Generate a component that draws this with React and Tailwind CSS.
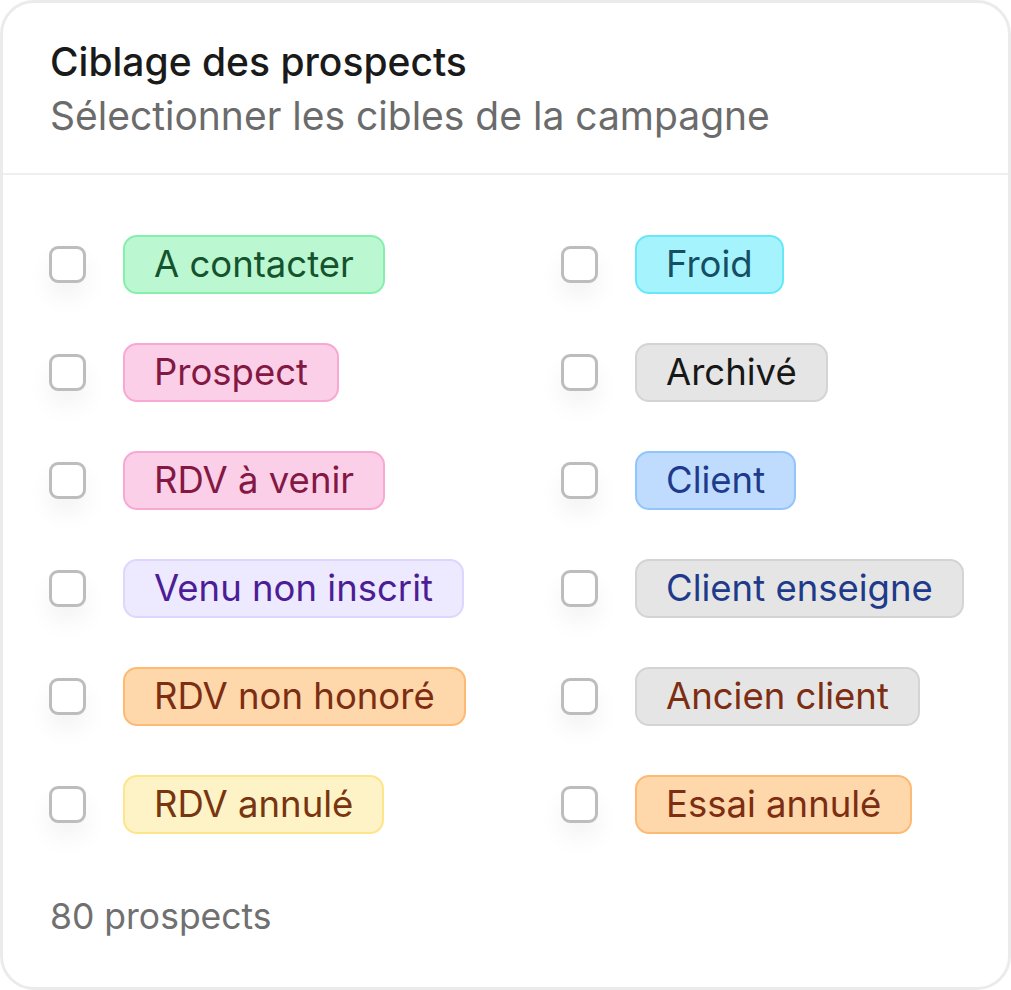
const LEFT = [
  { label: "A contacter", cls: "bg-[#bbf7d0] border-[#86efac] text-[#14532d]" },
  { label: "Prospect", cls: "bg-[#fbcfe8] border-[#f9a8d4] text-[#831843]" },
  { label: "RDV à venir", cls: "bg-[#fbcfe8] border-[#f9a8d4] text-[#831843]" },
  { label: "Venu non inscrit", cls: "bg-[#ede9fe] border-[#ddd6fe] text-[#4c1d95]" },
  { label: "RDV non honoré", cls: "bg-[#fed7aa] border-[#fdba74] text-[#7c2d12]" },
  { label: "RDV annulé", cls: "bg-[#fef3c7] border-[#fde68a] text-[#78350f]" },
];

const RIGHT = [
  { label: "Froid", cls: "bg-[#a5f3fc] border-[#67e8f9] text-[#164e63]" },
  { label: "Archivé", cls: "bg-[#e5e5e5] border-[#d4d4d4] text-[#171717]" },
  { label: "Client", cls: "bg-[#bfdbfe] border-[#93c5fd] text-[#1e3a8a]" },
  { label: "Client enseigne", cls: "bg-[#e5e5e5] border-[#d4d4d4] text-[#1e3a8a]" },
  { label: "Ancien client", cls: "bg-[#e5e5e5] border-[#d4d4d4] text-[#7c2d12]" },
  { label: "Essai annulé", cls: "bg-[#fed7aa] border-[#fdba74] text-[#7c2d12]" },
];

function Row({ item }) {
  return (
    <label className="flex items-center h-[108px] gap-[37px]">
      <span className="w-[37px] h-[37px] shrink-0 rounded-[9px] border-[3px] border-[#bdbdbd] bg-white shadow-[0_14px_24px_rgba(0,0,0,0.05)]" />
      <span className={`inline-flex items-center whitespace-nowrap h-[59px] px-[29px] rounded-[14px] border-2 text-[36.5px] leading-none ${item.cls}`}>
        {item.label}
      </span>
    </label>
  );
}

export default function App() {
  return (
    <div className="bg-white w-[1011px] h-[990px] font-['Inter',sans-serif]">
      <div className="w-[1011px] h-[990px] rounded-[34px] border-[3px] border-[#ebebeb] bg-white flex flex-col">
        {/* Header */}
        <div className="px-[47px] pt-[32px] pb-[30px] border-b-2 border-[#efefef]">
          <h2 className="text-[39px] leading-[54px] font-medium text-[#1a1a1a]">Ciblage des prospects</h2>
          <p className="text-[39px] leading-[54px] text-[#6b6b6b]">Sélectionner les cibles de la campagne</p>
        </div>

        {/* Targets */}
        <div className="grid grid-cols-2 gap-x-[111px] px-[46px] pt-[35px]">
          <div className="flex flex-col">
            {LEFT.map((item) => (
              <Row key={item.label} item={item} />
            ))}
          </div>
          <div className="flex flex-col">
            {RIGHT.map((item) => (
              <Row key={item.label} item={item} />
            ))}
          </div>
        </div>

        <p className="px-[47px] pt-[32px] text-[35.5px] leading-[54px] text-[#707070]">80 prospects</p>
      </div>
    </div>
  );
}
